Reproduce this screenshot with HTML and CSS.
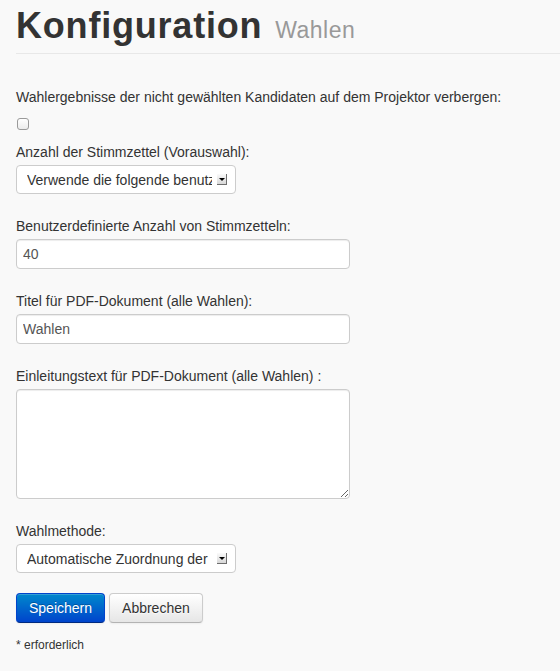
FILE: index.html
```html
<!DOCTYPE html>
<html lang="de">
<head>
<meta charset="utf-8">
<title>Konfiguration – Wahlen</title>
<link rel="stylesheet" href="styles.css">
</head>
<body>
<div class="page">
  <header class="page-header">
    <h1 class="title">Konfiguration <small class="subtitle">Wahlen</small></h1>
  </header>
  <form class="form">
    <div class="group group-check">
      <label class="label" for="hide">Wahlergebnisse der nicht gewählten Kandidaten auf dem Projektor verbergen:</label>
      <div class="check-row"><input class="checkbox" type="checkbox" id="hide"></div>
    </div>
    <div class="group">
      <label class="label" for="ballots">Anzahl der Stimmzettel (Vorauswahl):</label>
      <div class="select-wrap">
        <select class="select" id="ballots">
          <option>Verwende die folgende benutzerdefinierte Anzahl von Stimmzetteln</option>
        </select>
        <span class="select-arrow"></span>
      </div>
    </div>
    <div class="group">
      <label class="label" for="count">Benutzerdefinierte Anzahl von Stimmzetteln:</label>
      <input class="input" type="text" id="count" value="40">
    </div>
    <div class="group">
      <label class="label" for="pdftitle">Titel für PDF-Dokument (alle Wahlen):</label>
      <input class="input" type="text" id="pdftitle" value="Wahlen">
    </div>
    <div class="group">
      <label class="label" for="intro">Einleitungstext für PDF-Dokument (alle Wahlen) :</label>
      <textarea class="textarea" id="intro"></textarea>
    </div>
    <div class="group group-last">
      <label class="label" for="method">Wahlmethode:</label>
      <div class="select-wrap">
        <select class="select" id="method">
          <option>Automatische Zuordnung der Methode</option>
        </select>
        <span class="select-arrow"></span>
      </div>
    </div>
    <div class="actions">
      <button class="btn btn-primary" type="submit">Speichern</button>
      <button class="btn" type="button">Abbrechen</button>
    </div>
    <p class="note">* erforderlich</p>
  </form>
</div>
</body>
</html>
```
FILE: styles.css
```css
html, body {
  margin: 0;
  padding: 0;
  background: #f9f9f9;
}
body {
  font-family: "Liberation Sans", Arial, Helvetica, sans-serif;
  font-size: 14px;
  line-height: 18px;
  color: #333;
}
.page {
  padding: 6px 0 0 16px;
}
.page-header {
  padding-bottom: 7px;
  border-bottom: 1px solid #e8e8e8;
  margin-bottom: 34px;
}
.title {
  margin: 0;
  font-size: 36px;
  line-height: 40px;
  font-weight: bold;
  letter-spacing: 0.8px;
  color: #333;
}
.subtitle {
  font-size: 23px;
  line-height: 1;
  font-weight: normal;
  letter-spacing: 0.5px;
  color: #999;
  margin-left: 2px;
}
.form {
  margin: 0;
}
.group {
  margin-bottom: 23px;
}
.group-check {
  margin-bottom: 13px;
}
.group-last {
  margin-bottom: 20px;
}
.label {
  display: block;
  margin-bottom: 4px;
}
.check-row {
  height: 20px;
  padding-top: 8px;
  box-sizing: border-box;
}
.checkbox {
  margin: 0 0 0 1px;
  width: 12px;
  height: 12px;
  -webkit-appearance: none;
  appearance: none;
  border: 1px solid #9a9a9a;
  border-radius: 3px;
  background: linear-gradient(#ffffff, #ececec);
  box-sizing: border-box;
  display: block;
}
.select-wrap {
  position: relative;
  width: 220px;
}
.select {
  -webkit-appearance: none;
  appearance: none;
  display: block;
  width: 220px;
  height: 29px;
  box-sizing: border-box;
  border: 1px solid #cccccc;
  border-radius: 4px;
  background: #fff;
  padding: 0 19px 0 10px;
  font-family: "Liberation Sans", Arial, Helvetica, sans-serif;
  font-size: 14px;
  color: #333;
  margin: 0 0 1px;
}
.select-arrow {
  position: absolute;
  left: 201px;
  top: 9px;
  width: 10px;
  height: 11px;
  box-sizing: border-box;
  background: linear-gradient(#fafafa, #d8d8d8);
  border-right: 1px solid #6f6f6f;
  border-bottom: 1px solid #6f6f6f;
  box-shadow: -5px 0 0 #fff;
  pointer-events: none;
}
.select-arrow::after {
  content: "";
  position: absolute;
  left: 2px;
  top: 4px;
  border-left: 3px solid transparent;
  border-right: 3px solid transparent;
  border-top: 3px solid #000;
}
.input,
.textarea {
  display: block;
  width: 334px;
  box-sizing: border-box;
  border: 1px solid #cccccc;
  border-radius: 4px;
  background: #fff;
  box-shadow: inset 0 1px 1px rgba(0, 0, 0, 0.075);
  font-family: "Liberation Sans", Arial, Helvetica, sans-serif;
  font-size: 14px;
  color: #555;
  margin: 0;
}
.input {
  height: 30px;
  padding: 0 6px;
}
.textarea {
  height: 110px;
  padding: 4px 6px;
  resize: both;
}
.actions {
  display: flex;
  gap: 4px;
}
.btn {
  height: 30px;
  padding: 0 12px;
  font-family: "Liberation Sans", Arial, Helvetica, sans-serif;
  font-size: 14px;
  line-height: 28px;
  color: #333;
  border: 1px solid #cccccc;
  border-bottom-color: #b3b3b3;
  border-radius: 4px;
  background: linear-gradient(#ffffff, #e6e6e6);
  box-shadow: inset 0 1px 0 rgba(255, 255, 255, 0.2), 0 1px 2px rgba(0, 0, 0, 0.05);
  text-shadow: 0 1px 1px rgba(255, 255, 255, 0.75);
  cursor: pointer;
}
.btn-primary {
  color: #fff;
  border-color: #0044cc #0044cc #002a80;
  background: linear-gradient(#0088cc, #0044cc);
  text-shadow: 0 -1px 0 rgba(0, 0, 0, 0.25);
}
.note {
  margin: 14px 0 0;
  font-size: 12px;
  line-height: 16px;
  color: #333;
}
```
